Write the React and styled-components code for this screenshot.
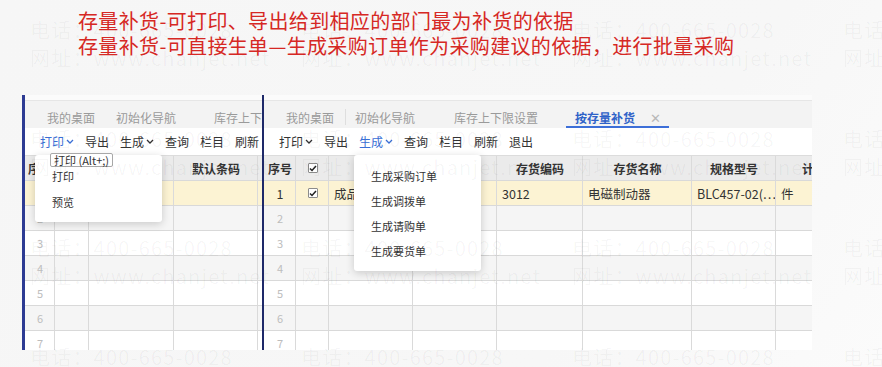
import React from 'react';
import styled, { createGlobalStyle } from 'styled-components';

const GlobalStyle = createGlobalStyle`
  html, body { margin: 0; padding: 0; }
  body { background: #f7f7f7; font-family: "Noto Sans CJK SC", "Noto Sans", sans-serif; }
  * { box-sizing: border-box; }
`;

const Page = styled.div`
  position: relative;
  width: 882px;
  height: 367px;
  overflow: hidden;
  padding-top: 8px;
  background: linear-gradient(125deg, #f6f6f6 0%, #f7f7f7 70%, #fbfbfb 100%);
`;

const Title = styled.div`
  margin-left: 78px;
  color: #d62824;
  font-size: 20px;
  line-height: 25px;
  letter-spacing: 0.35px;
  white-space: nowrap;
`;

const Panels = styled.div`
  display: flex;
  margin: 37px 0 0 22px;
  height: 255px;
`;

const Panel = styled.div`
  position: relative;
  width: ${(p) => p.$w}px;
  border-left: ${(p) => p.$bw}px solid ${(p) => p.$bc};
  background: #fbfbfb;
  padding-top: 5px;
  overflow: hidden;
`;

const TabBar = styled.div`
  display: flex;
  align-items: stretch;
  height: 28px;
  background: #f3f3f3;
  border-top: 1px solid #e6e6e6;
  padding-left: 11px;
  font-size: 12px;
  color: #9a9a9a;
  white-space: nowrap;
`;

const Tab = styled.div`
  display: flex;
  align-items: flex-start;
  gap: 15px;
  padding: 9px ${(p) => p.$pr}px 0 ${(p) => p.$pl}px;
  line-height: 16px;
  border-bottom: 2px solid ${(p) => (p.$active ? '#3d6fd8' : 'transparent')};
  color: ${(p) => (p.$active ? '#2f62c8' : '#9a9a9a')};
  font-weight: ${(p) => (p.$active ? 700 : 400)};
`;

const TabSep = styled.div`
  width: 1px;
  height: 16px;
  margin-top: 8px;
  background: #dedede;
`;

const Close = styled.span`
  color: #b8b8b8;
  font-weight: 400;
  font-size: 13px;
`;

const Toolbar = styled.div`
  display: flex;
  align-items: center;
  gap: 11px;
  height: 27px;
  padding-left: 15px;
  background: #fff;
  font-size: 12px;
  color: #333;
  white-space: nowrap;
`;

const ToolItem = styled.span`
  display: inline-flex;
  align-items: center;
  gap: 2px;
  color: ${(p) => (p.$active ? '#3a6fd6' : '#333')};
`;

const Row = styled.div`
  display: grid;
  grid-template-columns: ${(p) => p.$cols};
  height: ${(p) => (p.$head ? 26 : 25)}px;
  background: ${(p) => p.$bg};
  border-top: ${(p) => (p.$head ? '1px solid #dcdcdc' : 'none')};
  border-bottom: 1px solid #d9d9d9;
`;

const Cell = styled.div`
  display: flex;
  align-items: center;
  justify-content: ${(p) => (p.$center ? 'center' : 'flex-start')};
  padding: 0 4px 0 5px;
  border-right: 1px solid #dadada;
  font-size: ${(p) => (p.$head ? '12px' : p.$muted ? '11px' : '12.5px')};
  font-weight: ${(p) => (p.$head ? 700 : 400)};
  color: ${(p) => (p.$muted ? '#bdbdbd' : '#333')};
  white-space: nowrap;
  overflow: hidden;
`;

const Box = styled.span`
  display: inline-flex;
  align-items: center;
  justify-content: center;
  width: 10px;
  height: 10px;
  border: 1px solid #8c8c8c;
  border-radius: 1px;
  background: #fff;
`;

const Menu = styled.div`
  position: absolute;
  left: ${(p) => p.$left}px;
  top: 60px;
  width: 127px;
  padding: ${(p) => p.$pt}px 0 7px;
  background: #fff;
  border-radius: 3px;
  box-shadow: 0 2px 8px rgba(0, 0, 0, 0.18);
  z-index: 3;
`;

const MenuItem = styled.div`
  height: ${(p) => p.$h}px;
  line-height: ${(p) => p.$h}px;
  padding-left: 17px;
  font-size: 11px;
  color: #333;
  white-space: nowrap;
`;

const Tip = styled.div`
  position: absolute;
  left: 25px;
  top: 58px;
  padding: 0 3px;
  height: 14px;
  line-height: 12px;
  border: 1px solid #a8a8a8;
  border-radius: 2px;
  background: #fff;
  font-size: 11px;
  color: #333;
  white-space: nowrap;
  z-index: 4;
`;

const Watermark = styled.div`
  position: absolute;
  inset: 0;
  pointer-events: none;
  z-index: 10;
  display: grid;
  grid-template-columns: repeat(4, 271px);
  grid-auto-rows: 109px;
  padding: 16px 0 0 30px;
`;

const Mark = styled.div`
  font-size: 20px;
  line-height: 28px;
  letter-spacing: 1.2px;
  color: rgba(0, 0, 0, 0.04);
  white-space: nowrap;
`;

const Chevron = () => (
  <svg width="8" height="5" viewBox="0 0 8 5">
    <polyline points="1,1 4,4 7,1" fill="none" stroke="currentColor" strokeWidth="1.3" />
  </svg>
);

const Check = () => (
  <svg width="8" height="7" viewBox="0 0 8 7">
    <polyline points="1,3.5 3,5.5 7,1" fill="none" stroke="#222" strokeWidth="1.5" />
  </svg>
);

const rowBg = (i) => (i === 1 ? '#fcf3d3' : i % 2 === 0 ? '#f5f5f5' : '#fff');

const LEFT_COLS = '30px 34px 85px 84px 1fr';
const RIGHT_COLS = '32px 33px 84px 84px 86px 109px 84px 100px';

const LeftPanel = () => (
  <Panel $w={240} $bw={3} $bc="#2d3b93">
    <TabBar>
      <Tab $pl={11} $pr={11}>我的桌面</Tab>
      <TabSep />
      <Tab $pl={10} $pr={28}>初始化导航</Tab>
      <Tab $pl={10} $pr={10}>库存上下限设置</Tab>
    </TabBar>
    <Toolbar>
      <ToolItem $active>打印<Chevron /></ToolItem>
      <ToolItem>导出</ToolItem>
      <ToolItem>生成<Chevron /></ToolItem>
      <ToolItem>查询</ToolItem>
      <ToolItem>栏目</ToolItem>
      <ToolItem>刷新</ToolItem>
    </Toolbar>
    <Row $head $cols={LEFT_COLS} $bg="#ebebeb">
      <Cell $head $center>序号</Cell>
      <Cell $head $center><Box><Check /></Box></Cell>
      <Cell $head $center></Cell>
      <Cell $head $center>默认条码</Cell>
      <Cell $head></Cell>
    </Row>
    {[1, 2, 3, 4, 5, 6, 7].map((i) => (
      <Row key={i} $cols={LEFT_COLS} $bg={rowBg(i)}>
        <Cell $center $muted={i !== 1}>{i}</Cell>
        <Cell $center>{i === 1 ? <Box><Check /></Box> : null}</Cell>
        <Cell>{i === 1 ? '成品库' : ''}</Cell>
        <Cell></Cell>
        <Cell></Cell>
      </Row>
    ))}
    <Menu $left={10} $pt={8}>
      <MenuItem $h={26}>打印</MenuItem>
      <MenuItem $h={26}>预览</MenuItem>
    </Menu>
    <Tip>打印 (Alt+;)</Tip>
  </Panel>
);

const RightPanel = () => (
  <Panel $w={550} $bw={2} $bc="#1e2969">
    <TabBar>
      <Tab $pl={11} $pr={11}>我的桌面</Tab>
      <TabSep />
      <Tab $pl={9} $pr={29}>初始化导航</Tab>
      <Tab $pl={10} $pr={28}>库存上下限设置</Tab>
      <Tab $active $pl={9} $pr={8}>按存量补货<Close>✕</Close></Tab>
    </TabBar>
    <Toolbar>
      <ToolItem>打印<Chevron /></ToolItem>
      <ToolItem>导出</ToolItem>
      <ToolItem $active>生成<Chevron /></ToolItem>
      <ToolItem>查询</ToolItem>
      <ToolItem>栏目</ToolItem>
      <ToolItem>刷新</ToolItem>
      <ToolItem>退出</ToolItem>
    </Toolbar>
    <Row $head $cols={RIGHT_COLS} $bg="#ebebeb">
      <Cell $head $center>序号</Cell>
      <Cell $head $center><Box><Check /></Box></Cell>
      <Cell $head $center></Cell>
      <Cell $head $center></Cell>
      <Cell $head $center>存货编码</Cell>
      <Cell $head $center>存货名称</Cell>
      <Cell $head $center>规格型号</Cell>
      <Cell $head $center>计量单位</Cell>
    </Row>
    {[1, 2, 3, 4, 5, 6, 7].map((i) => (
      <Row key={i} $cols={RIGHT_COLS} $bg={rowBg(i)}>
        <Cell $center $muted={i !== 1}>{i}</Cell>
        <Cell $center>{i === 1 ? <Box><Check /></Box> : null}</Cell>
        <Cell>{i === 1 ? '成品库' : ''}</Cell>
        <Cell></Cell>
        <Cell>{i === 1 ? '3012' : ''}</Cell>
        <Cell>{i === 1 ? '电磁制动器' : ''}</Cell>
        <Cell>{i === 1 ? 'BLC457-02(…' : ''}</Cell>
        <Cell>{i === 1 ? '件' : ''}</Cell>
      </Row>
    ))}
    <Menu $left={90} $pt={9}>
      <MenuItem $h={25}>生成采购订单</MenuItem>
      <MenuItem $h={25}>生成调拨单</MenuItem>
      <MenuItem $h={25}>生成请购单</MenuItem>
      <MenuItem $h={25}>生成要货单</MenuItem>
    </Menu>
  </Panel>
);

export default function App() {
  const marks = Array.from({ length: 16 });
  return (
    <>
      <GlobalStyle />
      <Page>
        <Title>
          <div>存量补货-可打印、导出给到相应的部门最为补货的依据</div>
          <div>存量补货-可直接生单—生成采购订单作为采购建议的依据，进行批量采购</div>
        </Title>
        <Panels>
          <LeftPanel />
          <RightPanel />
        </Panels>
        <Watermark>
          {marks.map((_, i) => (
            <Mark key={i}>
              <div>电话：400-665-0028</div>
              <div>网址：www.chanjet.net</div>
            </Mark>
          ))}
        </Watermark>
      </Page>
    </>
  );
}
